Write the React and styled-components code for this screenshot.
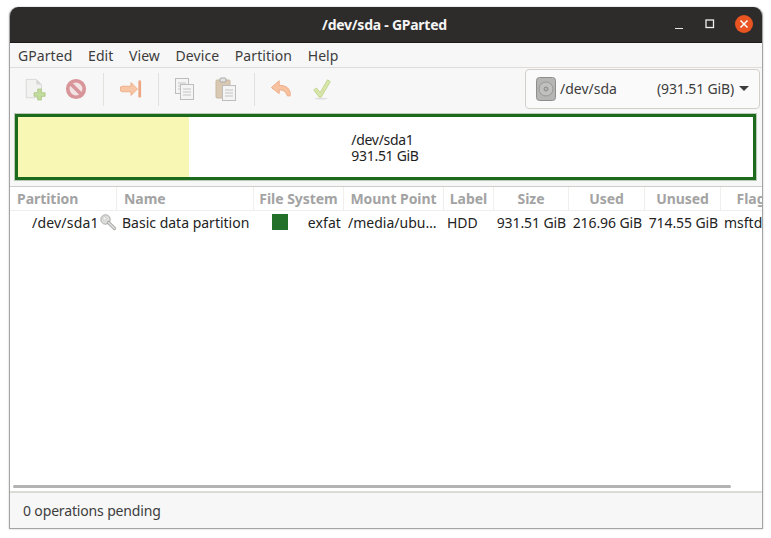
import React from "react";
import styled, { createGlobalStyle } from "styled-components";

const Global = createGlobalStyle`
  html, body { margin: 0; padding: 0; background: #fff; width: 771px; height: 538px; overflow: hidden; }
  body { font-family: "Noto Sans", "Liberation Sans", sans-serif; }
  * { box-sizing: border-box; }
`;

const Page = styled.div`
  width: 771px;
  height: 538px;
  padding: 7px 8px 9px 9px;
`;
const Win = styled.div`
  width: 754px;
  height: 522px;
  display: flex;
  flex-direction: column;
  border: 1px solid #a4a4a4;
  border-top: 0;
  border-radius: 9px 9px 0 0;
  overflow: hidden;
  background: #fff;
  box-shadow: 0 0 2px rgba(0,0,0,.25);
`;
const TitleBar = styled.div`
  height: 36px;
  flex: none;
  background: #2d2c2b;
  border-bottom: 1px solid #1d1c1b;
  position: relative;
  display: flex;
  align-items: center;
  justify-content: center;
  padding-right: 3px;
  color: #f5f5f5;
  font-size: 14px;
  font-weight: 700;
  letter-spacing: -0.25px;
`;
const WinButtons = styled.div`
  position: absolute;
  right: 9px;
  top: 8px;
  display: flex;
  align-items: center;
  gap: 19px;
`;
const Close = styled.span`
  width: 18px;
  height: 18px;
  border-radius: 50%;
  background: #e95420;
  display: flex;
  align-items: center;
  justify-content: center;
`;
const MenuBar = styled.div`
  height: 25px;
  flex: none;
  background: #f7f7f7;
  border-bottom: 1px solid #dfdcd9;
  display: flex;
  align-items: center;
  padding: 1px 0 0 8px;
  gap: 15.6px;
  font-size: 14px;
  letter-spacing: 0.08px;
  color: #3d3d3d;
`;
const Toolbar = styled.div`
  height: 42px;
  flex: none;
  background: #f7f7f7;
  display: flex;
  align-items: center;
  padding: 0 0 0 14px;
`;
const Tool = styled.span`
  width: 22px;
  height: 24px;
  display: flex;
  align-items: center;
  justify-content: center;
  margin-right: ${p => p.$gap ?? 19}px;
  filter: blur(0.35px);
`;
const Sep = styled.span`
  width: 1px;
  height: 33px;
  background: #e3e1de;
  margin-right: ${p => p.$gap ?? 16}px;
`;
const DiskCombo = styled.div`
  margin-left: auto;
  margin-right: 2px;
  width: 235px;
  height: 40px;
  margin-top: -1px;
  background: #fafafa;
  border: 1px solid #d3d0cc;
  border-radius: 4px;
  display: flex;
  align-items: center;
  padding: 0 10px 0 10px;
  font-size: 14px;
  color: #3d3d3d;
`;
const DiskName = styled.span`
  margin-left: 4px;
`;
const DiskSize = styled.span`
  margin-left: auto;
  margin-right: 5px;
  letter-spacing: -0.15px;
`;
const Caret = styled.span`
  width: 0;
  height: 0;
  border-left: 5px solid transparent;
  border-right: 5px solid transparent;
  border-top: 5px solid #3d3d3d;
`;
const MapArea = styled.div`
  height: 77px;
  flex: none;
  background: #f7f7f7;
  padding: 3px 5px 5px 4px;
  border-bottom: 1px solid #cfcdca;
`;
const DiskMap = styled.div`
  height: 68px;
  border: 4px solid #1c6a1c;
  outline: 1px solid #b9c9b6;
  outline-offset: -1px;
  background: #fff;
  position: relative;
  display: flex;
  align-items: center;
  justify-content: center;
`;
const Used = styled.div`
  position: absolute;
  left: 0;
  top: 0;
  bottom: 0;
  width: 171px;
  background: #f8f8b4;
`;
const MapLabel = styled.div`
  position: relative;
  font-size: 14px;
  line-height: 16px;
  letter-spacing: -0.3px;
  color: #1e1e1e;
  margin-left: -1px;
  margin-top: 2px;
`;
const Table = styled.div`
  flex: 1;
  min-height: 0;
  background: #fff;
  display: flex;
  flex-direction: column;
  position: relative;
  overflow: hidden;
`;
const cols = "107px 137px 90px 100px 50px 75px 76px 76px 68px";
const HeadRow = styled.div`
  display: grid;
  grid-template-columns: ${cols};
  height: 24px;
  border-bottom: 1px solid #efeeec;
  flex: none;
`;
const HeadCell = styled.div`
  font-size: 14px;
  font-weight: 700;
  letter-spacing: -0.05px;
  color: #a3a3a3;
  border-right: 1px solid #f0efed;
  display: flex;
  align-items: center;
  justify-content: ${p => p.$center ? "center" : "flex-start"};
  padding-left: ${p => p.$center ? 0 : 7}px;
  white-space: nowrap;
  overflow: hidden;
`;
const DataRow = styled.div`
  display: grid;
  grid-template-columns: ${cols};
  height: 24px;
  margin-top: -1px;
  flex: none;
`;
const Cell = styled.div`
  font-size: 14px;
  letter-spacing: ${p => p.$ls ?? "0"};
  color: #232323;
  display: flex;
  align-items: center;
  justify-content: ${p => p.$right ? "flex-end" : "flex-start"};
  padding: ${p => p.$pad || "0 0 0 5px"};
  white-space: nowrap;
  overflow: ${p => p.$clip ? "hidden" : "visible"};
`;
const KeySlot = styled.span`
  margin-left: 1px;
  display: flex;
`;
const FsSwatch = styled.span`
  width: 16px;
  height: 16px;
  background: #22702a;
  margin-left: 18px;
  margin-right: auto;
`;
const Scroll = styled.div`
  position: absolute;
  left: 3px;
  width: 718px;
  bottom: 3px;
  height: 3px;
  border-radius: 2px;
  background: #b3b3b3;
`;
const Status = styled.div`
  height: 37px;
  flex: none;
  background: #f7f7f7;
  border-top: 2px solid #dcdad7;
  display: flex;
  align-items: center;
  padding-left: 13px;
  font-size: 14px;
  letter-spacing: -0.15px;
  color: #3d3d3d;
`;

const NewIcon = () => (
  <svg width="24" height="26" viewBox="0 0 24 26">
    <path d="M2.5 2.5h11l5.500 5.500v14.500h-16.500z" fill="#f2f2f0" stroke="#d5d5d3" />
    <path d="M13.500 2.500v5.500h5.500z" fill="#d6d6d4" />
    <path d="M15 13h4v4h4v4h-4v4h-4v-4h-4v-4h4z" fill="#c2dc9c" stroke="#a4c27c" strokeWidth=".8" />
  </svg>
);
const StopIcon = () => (
  <svg width="24" height="24" viewBox="0 0 24 24">
    <circle cx="12" cy="12" r="9" fill="#f3e4e4" stroke="#d8959a" strokeWidth="4" />
    <path d="M6 6l12 12" stroke="#d8959a" strokeWidth="4" />
  </svg>
);
const ApplyArrow = () => (
  <svg width="24" height="22" viewBox="0 0 24 22">
    <path d="M3 8h9V4l7 7-7 7v-4H3a3 3 0 0 1 0-6z" fill="#f6c6a6" stroke="#eeaa82" strokeLinejoin="round" />
    <path d="M21.500 3v16" stroke="#eca684" strokeWidth="3" strokeLinecap="round" />
  </svg>
);
const Sheet = ({ x, y }) => (
  <g transform={`translate(${x} ${y})`}>
    <rect x=".5" y=".5" width="13" height="15" fill="#f4f4f4" stroke="#bdbdbd" />
    <path d="M3 5h8M3 8h8M3 11h8" stroke="#c4c4c4" />
  </g>
);
const CopyIcon = () => (
  <svg width="22" height="24" viewBox="0 0 22 24">
    <Sheet x={1} y={1} />
    <Sheet x={6} y={7} />
  </svg>
);
const PasteIcon = () => (
  <svg width="22" height="24" viewBox="0 0 22 24">
    <rect x="1" y="3" width="14" height="18" rx="1" fill="#d9c8b2" stroke="#c8b8a2" />
    <rect x="5" y="1" width="6" height="4" rx="1" fill="#e4e4e4" stroke="#a8a8a8" />
    <Sheet x={7} y={8} />
  </svg>
);
const UndoIcon = () => (
  <svg width="24" height="22" viewBox="0 0 24 22">
    <path d="M10 2L1.500 9.500 10 16v-4c4 0 7 1 9 6.500h3C23 11 18 7 10 7z" fill="#f6c2a0" stroke="#eea67e" strokeLinejoin="round" />
  </svg>
);
const CheckIcon = () => (
  <svg width="24" height="24" viewBox="0 0 24 24">
    <path d="M3 13l3-2 4 5L18 2l3 2-10 17h-2z" fill="#d9e6aa" stroke="#bcd28a" strokeLinejoin="round" />
    <ellipse cx="11" cy="22.500" rx="7" ry="1" fill="#ddd" />
  </svg>
);
const DiskIcon = () => (
  <svg width="20" height="24" viewBox="0 0 20 24">
    <rect x=".5" y=".5" width="19" height="23" rx="3" fill="#b5b5b3" stroke="#8e8e8c" />
    <circle cx="10" cy="12" r="7" fill="#c0c0be" stroke="#989896" />
    <circle cx="10" cy="12" r="2" fill="#b5b5b3" stroke="#8a8a88" />
  </svg>
);
const KeyIcon = () => (
  <svg width="17" height="17" viewBox="0 0 17 17">
    <circle cx="5.500" cy="5.500" r="4.700" fill="#dededc" stroke="#a8a8a6" />
    <circle cx="4.500" cy="4.500" r="1.500" fill="#fff" stroke="#b4b4b2" strokeWidth=".6" />
    <path d="M8.500 8.500l6 6" stroke="#a8a8a6" strokeWidth="3.200" strokeLinecap="round" />
    <path d="M8.500 8.500l6 6" stroke="#e2e2e0" strokeWidth="1.400" strokeLinecap="round" />
  </svg>
);

const menus = ["GParted", "Edit", "View", "Device", "Partition", "Help"];
const heads = [
  { t: "Partition", left: true },
  { t: "Name", left: true },
  { t: "File System" },
  { t: "Mount Point" },
  { t: "Label" },
  { t: "Size" },
  { t: "Used" },
  { t: "Unused" },
  { t: "Flags" },
];

export default function App() {
  return (
    <Page>
      <Global />
      <Win>
        <TitleBar>
          /dev/sda - GParted
          <WinButtons>
            <svg width="12" height="12" viewBox="0 0 12 12"><path d="M2 10.500h8" stroke="#e8e8e8" strokeWidth="1.200" /></svg>
            <svg width="12" height="12" viewBox="0 0 12 12"><rect x="2" y="2" width="7.500" height="7.500" fill="none" stroke="#eee" strokeWidth="1.300" /></svg>
            <Close>
              <svg width="10" height="10" viewBox="0 0 10 10"><path d="M1.500 1.500l7 7M8.500 1.500l-7 7" stroke="#fff" strokeWidth="1.500" /></svg>
            </Close>
          </WinButtons>
        </TitleBar>
        <MenuBar>
          {menus.map(m => <span key={m}>{m}</span>)}
        </MenuBar>
        <Toolbar>
          <Tool><NewIcon /></Tool>
          <Tool $gap={16}><StopIcon /></Tool>
          <Sep />
          <Tool $gap={16}><ApplyArrow /></Tool>
          <Sep $gap={15} />
          <Tool><CopyIcon /></Tool>
          <Tool $gap={17}><PasteIcon /></Tool>
          <Sep $gap={15} />
          <Tool><UndoIcon /></Tool>
          <Tool $gap={0}><CheckIcon /></Tool>
          <DiskCombo>
            <DiskIcon />
            <DiskName>/dev/sda</DiskName>
            <DiskSize>(931.51 GiB)</DiskSize>
            <Caret />
          </DiskCombo>
        </Toolbar>
        <MapArea>
          <DiskMap>
            <Used />
            <MapLabel>/dev/sda1<br />931.51 GiB</MapLabel>
          </DiskMap>
        </MapArea>
        <Table>
          <HeadRow>
            {heads.map(h => <HeadCell key={h.t} $center={!h.left}>{h.t}</HeadCell>)}
          </HeadRow>
          <DataRow>
            <Cell $pad="0 0 0 22px" $ls="0.2px">
              /dev/sda1<KeySlot><KeyIcon /></KeySlot>
            </Cell>
            <Cell>Basic data partition</Cell>
            <Cell $pad="0 3px 0 0" $ls="0.1px"><FsSwatch />exfat</Cell>
            <Cell $pad="0 0 0 4px">/media/ubu…</Cell>
            <Cell $pad="0 0 0 3px">HDD</Cell>
            <Cell $right $pad="0 3px 0 0" $ls="-0.1px">931.51 GiB</Cell>
            <Cell $right $pad="0 3px 0 0" $ls="-0.1px">216.96 GiB</Cell>
            <Cell $right $pad="0 3px 0 0" $ls="-0.1px">714.55 GiB</Cell>
            <Cell $pad="0 0 0 3px" $clip>msftdata</Cell>
          </DataRow>
          <Scroll />
        </Table>
        <Status>0 operations pending</Status>
      </Win>
    </Page>
  );
}
